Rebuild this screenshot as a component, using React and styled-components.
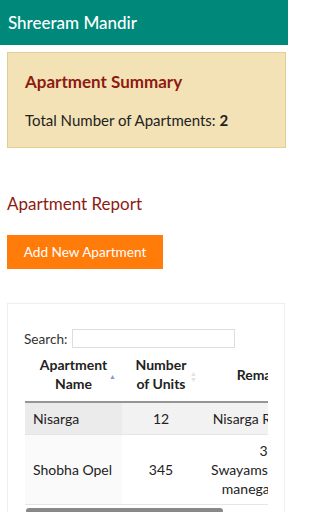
import React from 'react';
import styled, { createGlobalStyle } from 'styled-components';

const GlobalStyle = createGlobalStyle`
    body {
        margin: 0;
        background: #fff;
        font-family: Lato, "Open Sans", sans-serif;
        color: #222;
    }
`;

const Page = styled.div`
    width: 288px;
    overflow: hidden;
`;

const TopBar = styled.header`
    height: 45px;
    background-color: #00897b;
    color: #fff;
    display: flex;
    align-items: center;
    padding: 0 8px;
    font-size: 17px;
    font-weight: 500;
`;

const Main = styled.main`
    padding: 7px 2px 0 7px;
`;

const Summary = styled.section`
    background-color: #f3e2b6;
    border: 1px solid #e2cd97;
    padding: 18px 17px 16px;
`;

const SummaryTitle = styled.h3`
    margin: 0 0 16px;
    color: #8e1a12;
    font-size: 17px;
    font-weight: 700;
    line-height: 22px;
`;

const SummaryText = styled.p`
    margin: 0;
    font-size: 15px;
    line-height: 22px;
    color: #222;
    b { font-weight: 700; }
`;

const SectionTitle = styled.h3`
    margin: 45px 0 20px;
    color: #8e1a12;
    font-size: 17px;
    font-weight: 400;
    line-height: 22px;
`;

const Button = styled.button`
    display: block;
    height: 34px;
    width: 156px;
    border: none;
    background-color: #ff7b0a;
    color: #fff;
    font-family: inherit;
    font-size: 13.6px;
    padding: 0;
    cursor: pointer;
`;

const Card = styled.div`
    margin-top: 34px;
    margin-right: 1px;
    border: 1px solid #eeeeee;
    border-bottom: none;
    padding: 25px 16px 0;
    background: #fff;
`;

const SearchRow = styled.label`
    display: flex;
    align-items: center;
    gap: 5px;
    font-size: 13.6px;
    color: #333;
`;

const SearchInput = styled.input`
    box-sizing: border-box;
    width: 163px;
    height: 19px;
    border: 1px solid #ddd;
    padding: 0;
`;

const Scroller = styled.div`
    overflow: hidden;
    margin-top: 3px;
    margin-left: 1px;
`;

const ScrollThumb = styled.div`
    width: 197px;
    height: 6px;
    margin: 3px 0 0 2px;
    border-radius: 3px;
    background-color: #888;
`;

const Table = styled.table`
    border-collapse: collapse;
    width: 302px;
    table-layout: fixed;
    font-size: 14px;
    line-height: 19px;
`;

const Th = styled.th`
    position: relative;
    padding: 4px 12px 8px;
    font-weight: 700;
    text-align: center;
    color: #222;
    border-bottom: 2px solid #959595;
`;

const SortMark = styled.span`
    position: absolute;
    right: ${p => p.right}px;
    top: 50%;
    transform: translateY(-50%);
    font-size: 7px;
    line-height: 6px;
    color: ${p => (p.active ? '#8c96d6' : '#e2e2e2')};
    display: flex;
    flex-direction: column;
`;

const Row = styled.tr`
    background-color: ${p => (p.odd ? '#f2f2f2' : '#fff')};
    border-bottom: 1px solid #e6e6e6;
`;

const Td = styled.td`
    padding: 6px 8px;
    text-align: ${p => p.align || 'center'};
    background-color: ${p => (p.sorted ? (p.odd ? '#ebebeb' : '#fafafa') : 'transparent')};
    white-space: nowrap;
    overflow: hidden;
`;

const rows = [
    { name: 'Nisarga', units: 12, remarks: ['Nisarga Regency'] },
    { name: 'Shobha Opel', units: 345, remarks: ['3', 'Swayamsevakaru', 'manegarannu'] },
];

const App = () => (
    <Page>
        <GlobalStyle />
        <TopBar>Shreeram Mandir</TopBar>
        <Main>
            <Summary>
                <SummaryTitle>Apartment Summary</SummaryTitle>
                <SummaryText>Total Number of Apartments: <b>2</b></SummaryText>
            </Summary>
            <SectionTitle>Apartment Report</SectionTitle>
            <Button>Add New Apartment</Button>
            <Card>
                <SearchRow>
                    Search:
                    <SearchInput type="search" />
                </SearchRow>
                <Scroller>
                    <Table>
                        <colgroup>
                            <col style={{ width: 97 }} />
                            <col style={{ width: 78 }} />
                            <col style={{ width: 127 }} />
                        </colgroup>
                        <thead>
                            <tr>
                                <Th>Apartment Name<SortMark active right={6}>▲</SortMark></Th>
                                <Th>Number of Units<SortMark right={3}><span>▲</span><span>▼</span></SortMark></Th>
                                <Th>Remarks</Th>
                            </tr>
                        </thead>
                        <tbody>
                            {rows.map((r, i) => (
                                <Row key={r.name} odd={i % 2 === 0}>
                                    <Td align="left" sorted odd={i % 2 === 0}>{r.name}</Td>
                                    <Td>{r.units}</Td>
                                    <Td>
                                        {r.remarks.map((line, j) => (
                                            <div key={j}>{line}</div>
                                        ))}
                                    </Td>
                                </Row>
                            ))}
                        </tbody>
                    </Table>
                </Scroller>
                <ScrollThumb />
            </Card>
        </Main>
    </Page>
);

export default App;
